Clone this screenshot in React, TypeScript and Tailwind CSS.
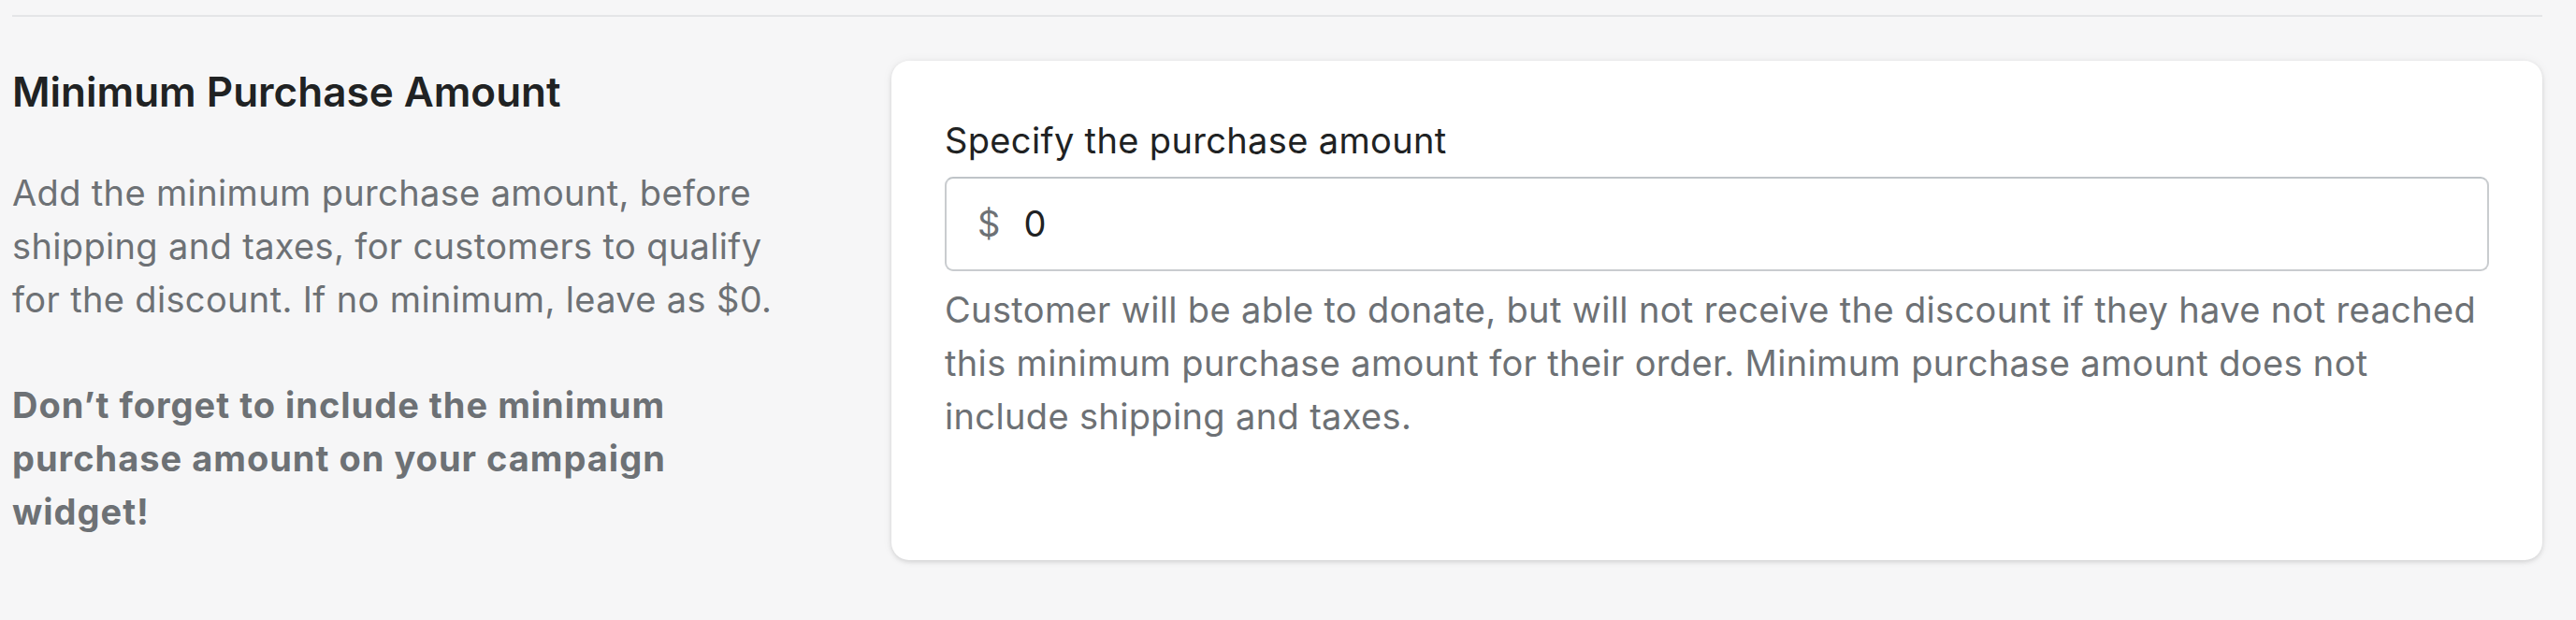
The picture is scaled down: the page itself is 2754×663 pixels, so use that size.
import React from "react";

export default function App() {
  return (
    <div
      className="min-h-screen w-full bg-[#f6f6f7] pl-[13px] pr-[36px] pt-[16px]"
      style={{ fontFamily: "Inter, 'Noto Sans', sans-serif" }}
    >
      <div className="border-t-2 border-[#e4e5e7]" />
      <div className="mt-[47px] flex gap-[110px]">
        <div className="w-[830px] shrink-0">
          <h2 className="text-[44px] leading-[66px] font-semibold text-[#202223]">
            Minimum Purchase Amount
          </h2>
          <p className="mt-[47px] text-[38px] leading-[57px] tracking-[0.35px] text-[#6d7175]">
            Add the minimum purchase amount, before shipping and taxes, for
            customers to qualify for the discount. If no minimum, leave as $0.
          </p>
          <p className="mt-[56px] text-[38px] leading-[57px] tracking-[1px] font-bold text-[#6d7175]">
            Don’t forget to include the minimum purchase amount on your campaign
            widget!
          </p>
        </div>
        <div className="flex-1 rounded-[19px] bg-white px-[57px] pt-[57px] pb-[125px] shadow-[0_0_12px_rgba(23,24,24,0.05),0_2px_5px_rgba(0,0,0,0.12)]">
          <label className="block text-[38px] leading-[57px] tracking-[0.35px] text-[#202223]">
            Specify the purchase amount
          </label>
          <div className="mt-[10px] flex h-[101px] items-center rounded-[9px] border-2 border-[#c9cccf] border-t-[#bfc4c8] bg-white pl-[33px] pr-[24px]">
            <span className="text-[38px] leading-[57px] text-[#6d7175]">$</span>
            <span className="ml-[25px] text-[38px] leading-[57px] text-[#202223]">0</span>
          </div>
          <p className="mt-[13px] text-[38px] leading-[57px] tracking-[0.35px] text-[#6d7175]">
            Customer will be able to donate, but will not receive the discount
            if they have not reached this minimum purchase amount for their
            order. Minimum purchase amount does not include shipping and taxes.
          </p>
        </div>
      </div>
    </div>
  );
}
